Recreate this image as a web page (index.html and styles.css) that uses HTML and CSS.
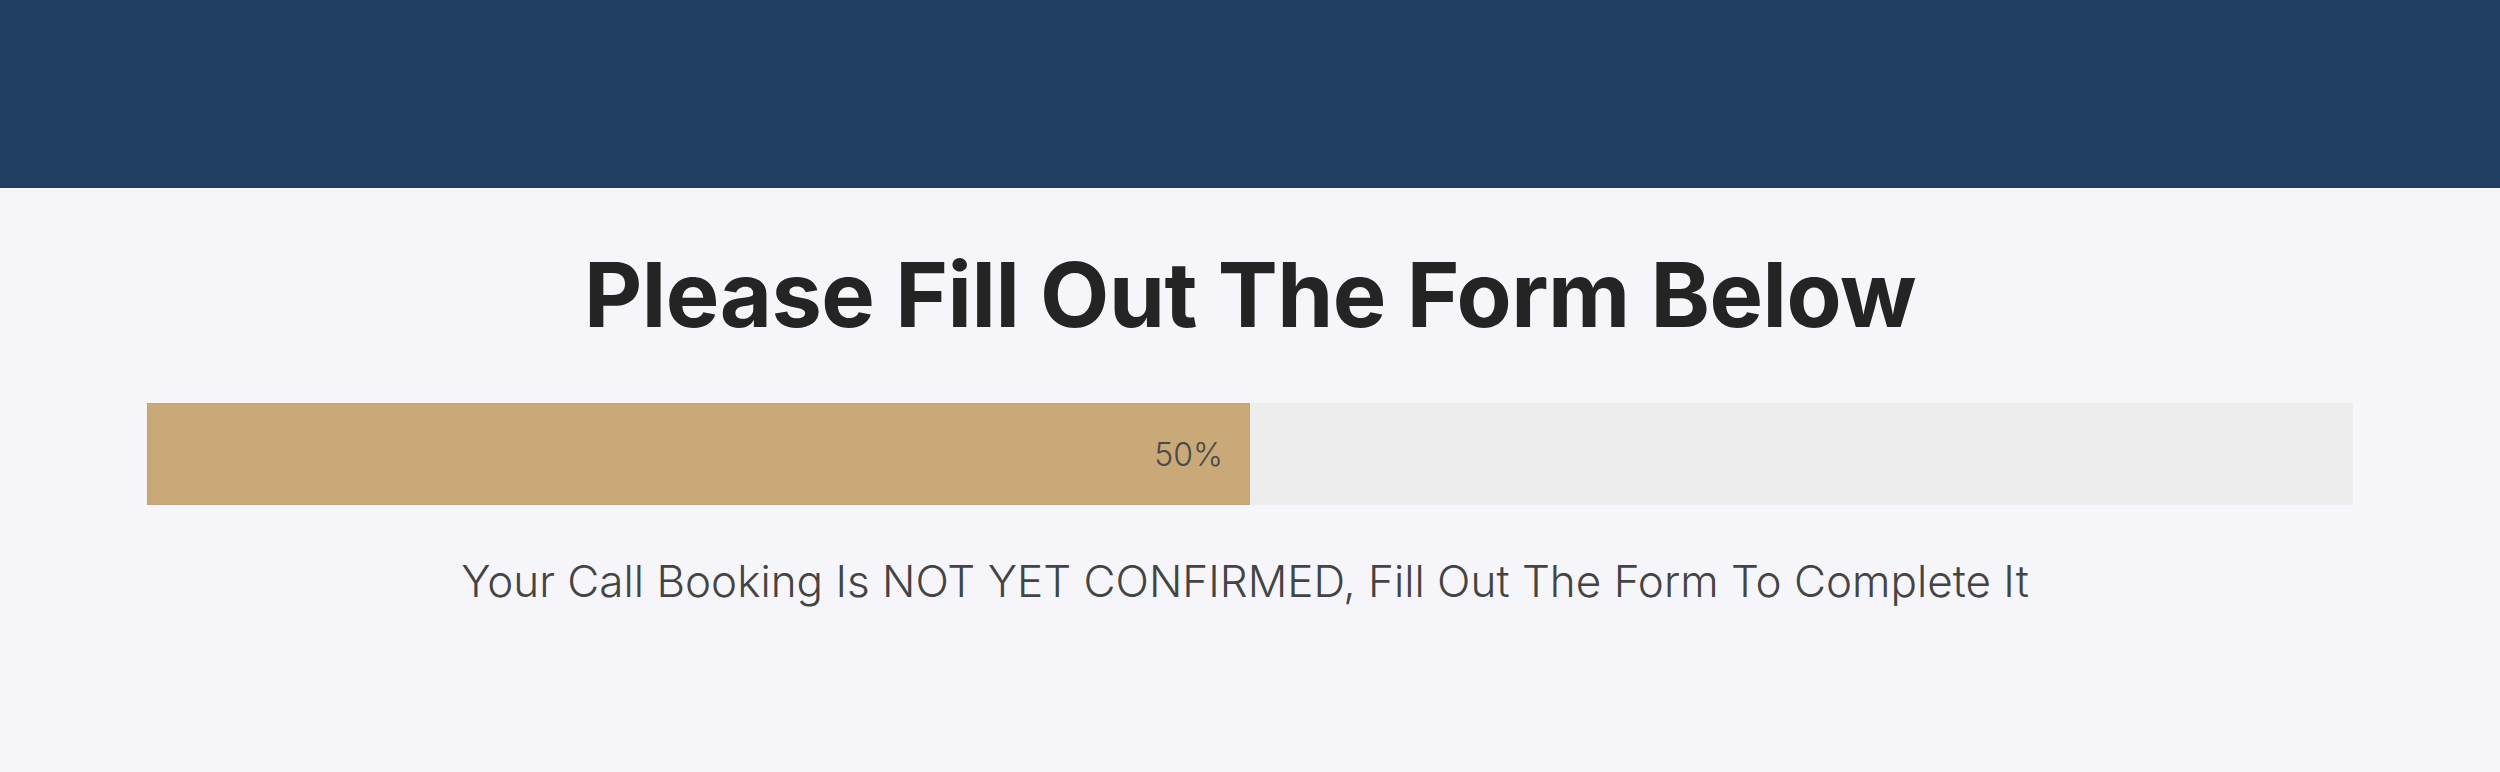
FILE: index.html
```html
<!DOCTYPE html>
<html lang="en">
<head>
<meta charset="utf-8">
<title>Please Fill Out The Form Below</title>
<link rel="stylesheet" href="styles.css">
</head>
<body>
<header class="topbar"></header>
<main class="content">
  <h1 class="title">Please Fill Out The Form Below</h1>
  <div class="progress">
    <div class="progress-fill" style="width: 50%;"><span class="progress-label">50%</span></div>
  </div>
  <p class="notice">Your Call Booking Is NOT YET CONFIRMED, Fill Out The Form To Complete It</p>
</main>
</body>
</html>
```

FILE: styles.css
```css
html, body {
  margin: 0;
  padding: 0;
}
body {
  background: #f6f6fa;
  font-family: "Inter", "Noto Sans", sans-serif;
  min-height: 772px;
}
.topbar {
  height: 188px;
  background: #203f63;
}
.content {
  padding: 0 147px;
  display: flex;
  flex-direction: column;
}
.title {
  margin: 53px 0 0;
  font-size: 90px;
  line-height: 108px;
  font-weight: 700;
  letter-spacing: -0.5px;
  color: #242424;
  text-align: center;
}
.progress {
  margin-top: 54px;
  height: 102px;
  background: #ededed;
  display: flex;
}
.progress-fill {
  background: #c8a977;
  box-shadow: inset 0 0 0 1px #c4a472;
  display: flex;
  align-items: center;
  justify-content: flex-end;
  padding-right: 27px;
  box-sizing: border-box;
}
.progress-label {
  font-size: 32px;
  font-weight: 300;
  color: #4a4a4a;
}
.notice {
  margin: 43px 0 0;
  padding-right: 10px;
  font-size: 44px;
  line-height: 66px;
  font-weight: 300;
  color: #444444;
  text-align: center;
}
```
